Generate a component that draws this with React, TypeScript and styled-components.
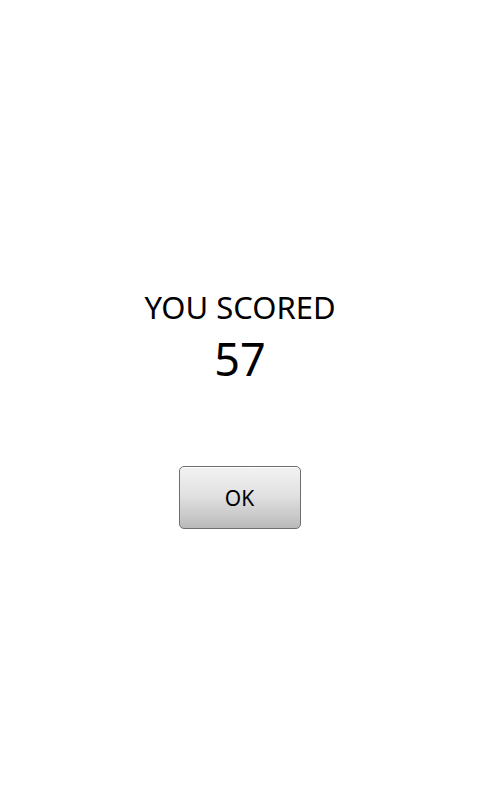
import React from 'react';
import styled, {createGlobalStyle} from 'styled-components';

const GlobalStyle = createGlobalStyle`
  html, body {
    margin: 0;
    padding: 0;
    background: #ffffff;
  }
  body {
    font-family: "Noto Sans", "Open Sans", "DejaVu Sans", sans-serif;
  }
`;

const Screen = styled.div`
  width: 480px;
  height: 800px;
  display: flex;
  flex-direction: column;
  align-items: center;
  padding-top: 285px;
  box-sizing: border-box;
  background: #ffffff;
`;

const Label = styled.div`
  font-size: 31px;
  line-height: 44px;
  color: #000;
`;

const Score = styled.div`
  font-size: 45px;
  line-height: 52px;
  color: #000;
  margin-top: 4px;
`;

const OkButton = styled.button`
  margin-top: 81px;
  margin-right: 1px;
  width: 122px;
  height: 63px;
  border: 1px solid #6e6e6e;
  border-radius: 5px;
  background: linear-gradient(180deg, #f2f2f2 0%, #e2e2e2 45%, #c9c9c9 80%, #b9b9b9 100%);
  box-shadow: inset 0 1px 0 #ffffff;
  font-family: "Noto Sans", "Open Sans", sans-serif;
  font-size: 21px;
  color: #000;
  cursor: pointer;
  padding: 0;
`;

const App = () => {
  return (
    <>
      <GlobalStyle/>
      <Screen>
        <Label>YOU SCORED</Label>
        <Score>57</Score>
        <OkButton>OK</OkButton>
      </Screen>
    </>
  );
};

export default App;
